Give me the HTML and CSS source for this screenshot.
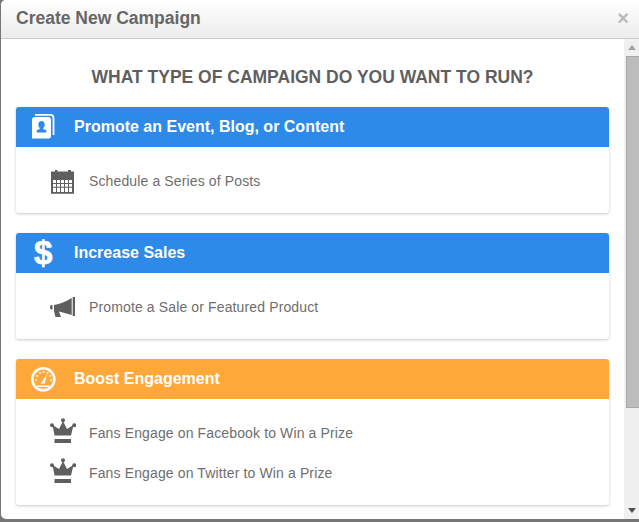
FILE: index.html
```html
<!DOCTYPE html>
<html lang="en">
<head>
<meta charset="utf-8">
<title>Create New Campaign</title>
<link rel="stylesheet" href="styles.css">
</head>
<body>
<div class="modal">
  <header class="modal-head">
    <h1 class="modal-title">Create New Campaign</h1>
    <span class="close">×</span>
  </header>
  <div class="modal-body">
    <main class="content">
      <h2 class="question">WHAT TYPE OF CAMPAIGN DO YOU WANT TO RUN?</h2>
      <section class="card">
        <div class="card-head blue">
          <span class="head-icon">
            <svg width="26" height="26" viewBox="0 0 26 26"><path fill="none" stroke="#fff" stroke-width="1.800" d="M5 .9H20.500a3 3 0 0 1 3 3V21"/><path fill="#fff" fill-rule="evenodd" d="M2 6a3 3 0 0 1 3-3H18a3 3 0 0 1 3 3V22a2.500 2.500 0 0 1-2.500 2.500H2ZM11.500 7c-2 0-3.200 1.500-3.200 3.600 0 1.400.5 2.600 1.400 3.300v1L6.800 16.300V18.500h9.500V16.300L13.300 14.900v-1c.9-.7 1.400-1.900 1.400-3.300C14.700 8.500 13.500 7 11.500 7Z"/></svg>
          </span>
          <h3 class="card-title">Promote an Event, Blog, or Content</h3>
        </div>
        <ul class="card-list">
          <li class="row">
            <svg class="row-icon" width="26" height="26" viewBox="0 0 26 26"><path fill="#5f5f5f" fill-rule="evenodd" d="M1 3.500H5V2H7.500V3.500H18V2H21V3.500H24V25.800H1ZM3 12H6V14.900H3ZM7 12H10V14.900H7ZM11 12H14V14.900H11ZM15 12H18V14.900H15ZM19 12H22V14.900H19ZM3 15.900H6V18.800H3ZM7 15.900H10V18.800H7ZM11 15.900H14V18.800H11ZM15 15.900H18V18.800H15ZM19 15.900H22V18.800H19ZM3 19.800H6V24H3ZM7 19.800H10V24H7ZM11 19.800H14V24H11ZM15 19.800H18V24H15ZM19 19.800H22V24H19Z"/></svg>
            <span>Schedule a Series of Posts</span>
          </li>
        </ul>
      </section>
      <section class="card">
        <div class="card-head blue">
          <span class="head-icon dollar">$</span>
          <h3 class="card-title">Increase Sales</h3>
        </div>
        <ul class="card-list">
          <li class="row">
            <svg class="row-icon" width="26" height="26" viewBox="0 0 26 26"><path fill="#5f5f5f" d="M22.700 3H25V22H22.700ZM21.700 4V21L9 17.500 11 23H5.500L4 17V11C10 10 16 7.500 21.700 4ZM2.500 11V15.500H1.500C.5 15.500 0 14.500 0 13.200S.5 11 1.500 11Z"/></svg>
            <span>Promote a Sale or Featured Product</span>
          </li>
        </ul>
      </section>
      <section class="card">
        <div class="card-head orange">
          <span class="head-icon">
            <svg width="26" height="26" viewBox="0 0 26 26"><circle cx="13.300" cy="13.300" r="11" fill="none" stroke="#fff" stroke-width="2.600"/><g fill="#fff"><circle cx="6" cy="14" r="1"/><circle cx="7.200" cy="10" r="1"/><circle cx="10" cy="7" r="1"/><circle cx="13.500" cy="6" r="1"/><circle cx="17.500" cy="7" r="1"/><circle cx="20" cy="10" r="1"/><circle cx="21" cy="14" r="1"/><path d="M16.800 8 14.800 17.500H10.800Z"/><path d="M7.500 19.500H19.200L20.200 21H6.500Z"/></g></svg>
          </span>
          <h3 class="card-title">Boost Engagement</h3>
        </div>
        <ul class="card-list multi">
          <li class="row">
            <svg class="row-icon crown" width="26" height="30" viewBox="0 0 26 30"><use href="#crown"/></svg>
            <span>Fans Engage on Facebook to Win a Prize</span>
          </li>
          <li class="row">
            <svg class="row-icon crown" width="26" height="30" viewBox="0 0 26 30"><use href="#crown"/></svg>
            <span>Fans Engage on Twitter to Win a Prize</span>
          </li>
        </ul>
      </section>
    </main>
    <div class="scrollbar">
      <span class="arrow up"></span>
      <div class="track"><div class="thumb"></div></div>
      <span class="arrow down"></span>
    </div>
  </div>
</div>
<svg class="defs" width="0" height="0"><defs><g id="crown" fill="#5f5f5f"><circle cx="13" cy="2.300" r="2"/><circle cx="2" cy="7.200" r="2"/><circle cx="24.300" cy="7.200" r="2"/><path d="M13 3 17 11 23.500 7 21 17.500H4.500L2.500 7 9 11Z"/><path d="M4.500 21H21V25H4.500Z"/></g></defs></svg>
</body>
</html>
```
FILE: styles.css
```css
* { box-sizing: border-box; }
html, body { margin: 0; height: 100%; overflow: hidden; }
body {
  background: #777;
  padding: 0 0 3px 1px;
  font-family: "Liberation Sans", Arial, sans-serif;
  color: #666;
}
.modal {
  height: 519px;
  background: #fff;
  border-radius: 5px 0 0 5px;
  display: flex;
  flex-direction: column;
  overflow: hidden;
}
.modal-head {
  height: 39px;
  flex: none;
  display: flex;
  align-items: center;
  justify-content: space-between;
  padding: 0 10px 2px 15px;
  background: linear-gradient(#fff, #ececec);
  border-bottom: 1px solid #ccc;
}
.modal-title {
  margin: 0;
  font-size: 17.5px;
  font-weight: bold;
  color: #666;
}
.close {
  font-size: 20px;
  font-weight: bold;
  color: #bbb;
  line-height: 1;
}
.modal-body { flex: 1; display: flex; min-height: 0; }
.content { flex: 1; padding: 0 15px 0 15px; overflow: hidden; }
.question {
  margin: 29px 0 20px;
  font-size: 17.5px;
  line-height: 19px;
  font-weight: bold;
  text-align: center;
  color: #5f5f5f;
}
.card {
  background: #fff;
  border-radius: 3px;
  margin-bottom: 20px;
  box-shadow: 0 1px 3px rgba(0,0,0,.22);
}
.card-head {
  height: 40px;
  display: flex;
  align-items: center;
  border-radius: 3px 3px 0 0;
  color: #fff;
}
.blue { background: #2d8ae8; }
.orange { background: #ffa83a; }
.head-icon {
  width: 58px;
  padding-left: 14px;
  display: flex;
  flex: none;
}
.dollar {
  font-size: 33px;
  font-weight: bold;
  line-height: 40px;
  padding-left: 18px;
  -webkit-text-stroke: .7px #fff;
}
.card-title { margin: 0; font-size: 16px; font-weight: bold; }
.card-list { list-style: none; margin: 0; padding: 21px 0 19px; }
.card-list.multi { padding: 21px 0 19px; }
.row {
  height: 26px;
  display: flex;
  align-items: center;
  font-size: 14px;
  letter-spacing: .13px;
  color: #6e6e6e;
}
.multi .row + .row { margin-top: 14px; }
.row-icon { margin-left: 34px; margin-right: 13px; flex: none; }
.row-icon.crown { margin-left: 34px; margin-right: 13px; }
.scrollbar {
  width: 15px;
  flex: none;
  background: #f0f0f0;
  display: flex;
  flex-direction: column;
  align-items: center;
}
.track { flex: 1; width: 100%; padding-left: 2px; }
.thumb {
  height: 352px;
  background: #bcbcbc;
  border: 1px solid #a8a8a8;
  border-right: 0;
  margin-top: 0;
}
.arrow {
  flex: none;
  width: 0;
  height: 0;
  margin: 6px 0;
  border-left: 4px solid transparent;
  border-right: 4px solid transparent;
}
.arrow.up { border-bottom: 5px solid #a3a3a3; }
.arrow.down { border-top: 5px solid #505050; }
.defs { position: absolute; }
```
